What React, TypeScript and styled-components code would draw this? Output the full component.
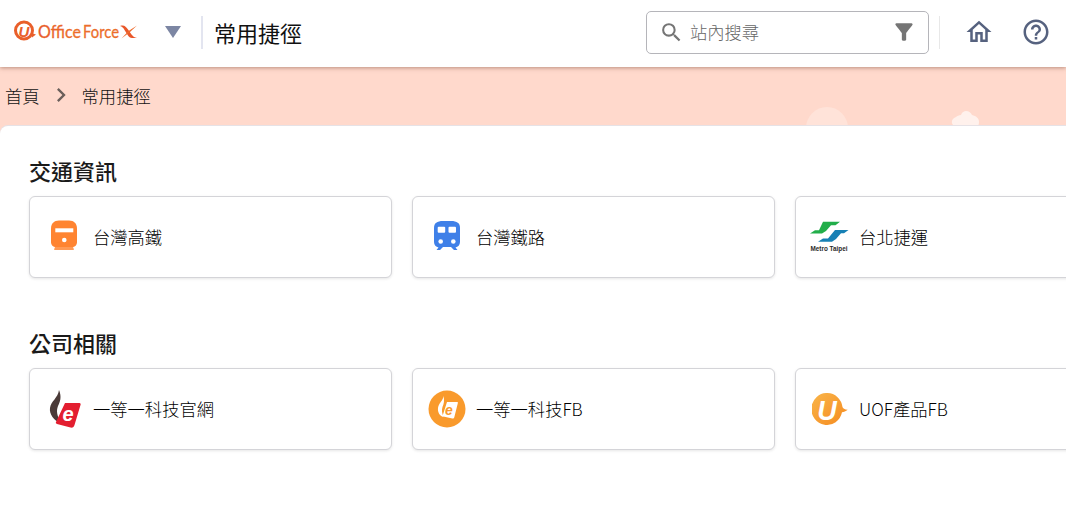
import React from "react";
import styled, { createGlobalStyle } from "styled-components";
import { MdChevronRight, MdFilterAlt, MdHelpOutline, MdOutlineHome, MdSearch } from "react-icons/md";

const GlobalStyle = createGlobalStyle`
  html, body {
    margin: 0;
    height: 100%;
    overflow: hidden;
    background: #fff;
    font-family: "Noto Sans CJK TC", "Noto Sans", sans-serif;
    color: #222;
  }
`;

const OfficeForceLogo = () => (
  <svg width="126" height="24" viewBox="0 0 126 24">
    <defs>
      <linearGradient id="ofx" x1="0" x2="1" y1="0" y2="0">
        <stop offset="0" stopColor="#e8562a" />
        <stop offset="1" stopColor="#ef7a2c" />
      </linearGradient>
    </defs>
    <circle cx="10" cy="10.500" r="8.500" fill="none" stroke="#e95f2a" strokeWidth="3" />
    <path d="M17 13l5 1.500-4 3z" fill="#e95f2a" />
    <text x="10" y="16.500" textAnchor="middle" fontFamily="'Liberation Sans'" fontWeight="700" fontStyle="italic" fontSize="15" fill="#e95f2a">U</text>
    <text x="24" y="17.500" fontFamily="Lato" fontWeight="400" fontSize="17" fill="url(#ofx)" stroke="#e9652a" strokeWidth=".3" textLength="43" lengthAdjust="spacingAndGlyphs">Office</text>
    <text x="69" y="17.500" fontFamily="Lato" fontWeight="400" fontSize="17" fill="#ec6e2b" stroke="#ec6e2b" strokeWidth=".3" textLength="36" lengthAdjust="spacingAndGlyphs">Force</text>
    <path d="M106 6c4-1.500 6 .5 8 3.500l3.500 5c1 1.500 3 3 5.500 3.500h-5c-2 0-3-1-4-2.500l-3.500-5.500c-1-2-2.500-3.500-4.500-4z" fill="#e9572a" />
    <path d="M123 5.500l-8.500 5.500-7 7.500 8.500-6.500z" fill="#ee6a2b" />
  </svg>
);

const HsrIcon = () => (
  <svg width="26" height="34" viewBox="0 0 26 34">
    <path d="M8 .5h10c5 0 8 3 8 8V22c0 3-2 5-5 5H5c-3 0-5-2-5-5V8.500c0-5 3-8 8-8z" fill="#ff8431" />
    <rect x="4.300" y="8.300" width="18" height="4" fill="#fff" />
    <circle cx="13.300" cy="20" r="2.300" fill="#fff" />
    <path d="M4 27h18l1 2.500c0 .3-.3.5-1 .5H4c-.7 0-1-.2-1-.5z" fill="#ff9a55" />
  </svg>
);

const TraIcon = () => (
  <svg width="26" height="34" viewBox="0 0 26 34">
    <path d="M9 1h8c6 0 9 2 9 7v14c0 3-2 5-4.500 5.500l2 2.500H20l-3-3H9l-3 3H2.500l2-2.500C2 27 0 25 0 22V8c0-5 3-7 9-7z" fill="#3f80e8" />
    <rect x="3.700" y="6.700" width="7.500" height="6" rx="1" fill="#fff" />
    <rect x="14.500" y="6.700" width="7.500" height="6" rx="1" fill="#fff" />
    <circle cx="6.700" cy="21.500" r="2.300" fill="#fff" />
    <circle cx="19.300" cy="21.500" r="2.300" fill="#fff" />
  </svg>
);

const MetroIcon = () => (
  <svg width="40" height="32" viewBox="0 0 40 32">
    <path d="M13 .7h17l-4.500 3.600H21l-5 5.700-4 2.400H0l5-3.100h4z" fill="#22ae4a" />
    <path d="M25 9h13.500L34 12.300h-3L26 18l-4 2.700H8l5-3.200h5z" fill="#1680b5" />
    <text x="19" y="29.700" textAnchor="middle" fontFamily="'Liberation Sans'" fontWeight="700" fontSize="6.300" fill="#2a2a2a" textLength="37" lengthAdjust="spacingAndGlyphs">Metro Taipei</text>
  </svg>
);

const EipIcon = () => (
  <svg width="34" height="38" viewBox="0 0 34 38">
    <path d="M12 0c3 7 1 12-1 16-2 5-1 10 3 17-7-2-12-9-11-15C4 11 11 8 12 0z" fill="#4a3a38" />
    <path d="M18 13h14.500c1 0 1.500 1 1 2l-6 20c-.5 2-2 3-4 2.500L10 34c-1-.5-1.500-1-1-2z" fill="#e31e30" />
    <text x="21" y="31" textAnchor="middle" fontFamily="'Liberation Sans'" fontWeight="700" fontStyle="italic" fontSize="20" fill="#fff">e</text>
  </svg>
);

const FbCircleIcon = () => (
  <svg width="38" height="38" viewBox="0 0 38 38">
    <circle cx="19" cy="19" r="18.500" fill="#f99a2c" />
    <path d="M15.500 6c1 4 .5 8-1 11-1 3-.5 6 1 10-4-1-6-5-5.500-9C10.500 13 15 11 15.500 6z" fill="#fff" />
    <path d="M19 12h10c.8 0 1 .6.8 1.200l-3.500 14c-.3 1-1 1.600-2 1.300l-9-2c-.6-.2-.8-.6-.6-1.100z" fill="#fff" />
    <text x="21" y="25" textAnchor="middle" fontFamily="'Liberation Sans'" fontWeight="700" fontStyle="italic" fontSize="14" fill="#f99a2c">e</text>
  </svg>
);

const UofIcon = () => (
  <svg width="36" height="32" viewBox="0 0 36 32">
    <defs>
      <linearGradient id="uof" x1="0" x2="1" y1="0" y2="1">
        <stop offset="0" stopColor="#f9b54a" />
        <stop offset="1" stopColor="#f58a1f" />
      </linearGradient>
    </defs>
    <path d="M15.500 0a15.500 16 0 0 1 15 14c.4 1.500 2 2.500 5.200 2.800-2 1.500-3.700 2.300-5.700 2.500A15.500 16 0 1 1 15.500 0z" fill="url(#uof)" />
    <text x="15" y="27" textAnchor="middle" fontFamily="'Liberation Sans'" fontWeight="700" fontStyle="italic" fontSize="27" fill="#fff">U</text>
  </svg>
);

const BannerClouds = () => (
  <CloudArt width="200" height="24" viewBox="0 0 200 24">
    <circle cx="23" cy="26" r="21" fill="#ffe3d9" />
    <path d="M152 24c-5 0-6-7 0-9 1-1 3-2 5-2 1-3 3-4 5-4 3 0 5 2 6 4 4 1 7 3 7 7 0 3-1 4-3 4z" fill="#fff1ec" />
  </CloudArt>
);

const sections = [
  {
    title: "交通資訊",
    links: [
      { label: "台灣高鐵", icon: <HsrIcon /> },
      { label: "台灣鐵路", icon: <TraIcon /> },
      { label: "台北捷運", icon: <MetroIcon /> },
    ],
  },
  {
    title: "公司相關",
    links: [
      { label: "一等一科技官網", icon: <EipIcon /> },
      { label: "一等一科技FB", icon: <FbCircleIcon /> },
      { label: "UOF產品FB", icon: <UofIcon /> },
    ],
  },
];

export default function App() {
  return (
    <Root>
      <GlobalStyle />
      <Header>
        <LogoSlot>
          <OfficeForceLogo />
        </LogoSlot>
        <DropArrow />
        <TitleDivider />
        <PageTitle>常用捷徑</PageTitle>
        <SearchBox>
          <MdSearch size={25} color="#757575" />
          <SearchText>站內搜尋</SearchText>
          <MdFilterAlt size={26} color="#757575" />
        </SearchBox>
        <ActionDivider />
        <HeaderIcon>
          <MdOutlineHome size={30} />
        </HeaderIcon>
        <HeaderIcon>
          <MdHelpOutline size={30} />
        </HeaderIcon>
      </Header>
      <Banner>
        <Crumb>首頁</Crumb>
        <MdChevronRight size={28} color="#6a5f5b" />
        <Crumb>常用捷徑</Crumb>
        <BannerClouds />
      </Banner>
      <Panel>
        {sections.map((section) => (
          <Section key={section.title}>
            <SectionTitle>{section.title}</SectionTitle>
            <CardGrid>
              {section.links.map((link) => (
                <Card key={link.label}>
                  <IconSlot>{link.icon}</IconSlot>
                  <CardLabel>{link.label}</CardLabel>
                </Card>
              ))}
            </CardGrid>
          </Section>
        ))}
      </Panel>
    </Root>
  );
}

const Root = styled.div`
  width: 1066px;
  height: 506px;
  overflow: hidden;
  position: relative;
`;

const Header = styled.header`
  height: 67px;
  display: flex;
  align-items: center;
  background: #fff;
  position: relative;
  z-index: 2;
  box-shadow: 0 1px 4px rgba(120, 70, 50, 0.5);

  & > * {
    flex: none;
  }
`;

const LogoSlot = styled.div`
  width: 165px;
  padding-left: 14px;
  box-sizing: border-box;
  display: flex;
  align-items: center;
  height: 24px;
  margin-top: -4px;
`;

const DropArrow = styled.div`
  width: 0;
  height: 0;
  border-left: 8.5px solid transparent;
  border-right: 8.5px solid transparent;
  border-top: 12px solid #7c86a3;
  margin-top: -3px;
`;

const TitleDivider = styled.div`
  width: 2px;
  height: 33px;
  background: #e3e5f0;
  margin: -3px 12px 0 20px;
`;

const PageTitle = styled.h1`
  margin: -3px 0 0 -1px;
  font-size: 22px;
  line-height: 30px;
  font-weight: 400;
  color: #111;
  width: 432px;
`;

const SearchBox = styled.div`
  width: 283px;
  height: 43px;
  box-sizing: border-box;
  border: 1px solid #b5b5ba;
  border-radius: 5px;
  display: flex;
  align-items: center;
  padding: 0 11px 0 12px;
  margin-top: -3px;
`;

const SearchText = styled.span`
  flex: 1;
  margin: -2px 0 0 6px;
  font-size: 17.3px;
  font-weight: 300;
  color: #666;
`;

const ActionDivider = styled.div`
  width: 1px;
  height: 33px;
  background: #e8e8e8;
  margin: -3px 19px 0 10px;
`;

const HeaderIcon = styled.div`
  width: 40px;
  margin-right: 17px;
  margin-top: -3px;
  display: flex;
  justify-content: center;
  color: #56627f;

  &:last-child {
    margin-right: 0;
  }
`;

const Banner = styled.nav`
  height: 69px;
  box-sizing: border-box;
  padding: 14px 0 0 5px;
  background: #ffd9cc;
  display: flex;
  align-items: flex-start;
  position: relative;
`;

const Crumb = styled.span`
  font-size: 17.3px;
  line-height: 30px;
  font-weight: 300;
  color: #111;
  margin-right: 7px;

  & + svg {
    margin: 0 7px 0 0;
  }
`;

const CloudArt = styled.svg`
  position: absolute;
  left: 804px;
  top: 35px;
`;

const Panel = styled.main`
  width: 1300px;
  height: 380px;
  margin-top: -10px;
  padding: 29px 0 0 29px;
  box-sizing: border-box;
  background: #fff;
  border-radius: 8px 8px 0 0;
  position: relative;
  box-shadow: 0 -1px 0 #e6e2e6;
`;

const Section = styled.section`
  margin-bottom: 49px;
`;

const SectionTitle = styled.h2`
  margin: 0 0 10px;
  font-size: 22px;
  line-height: 31px;
  font-weight: 500;
  color: #1a1a1a;
`;

const CardGrid = styled.div`
  display: grid;
  grid-template-columns: repeat(3, 363px);
  gap: 20px;
`;

const Card = styled.a`
  height: 82px;
  box-sizing: border-box;
  display: flex;
  align-items: center;
  border: 1px solid #d4d4d8;
  border-radius: 6px;
  background: #fff;
  box-shadow: 0 1px 3px rgba(0, 0, 0, 0.1);
`;

const IconSlot = styled.div`
  width: 60px;
  flex: none;
  display: flex;
  justify-content: center;
  align-items: center;
  margin-left: 4px;
`;

const CardLabel = styled.span`
  margin: -2px 0 0 -1px;
  font-size: 17.3px;
  font-weight: 300;
  color: #000;
`;
